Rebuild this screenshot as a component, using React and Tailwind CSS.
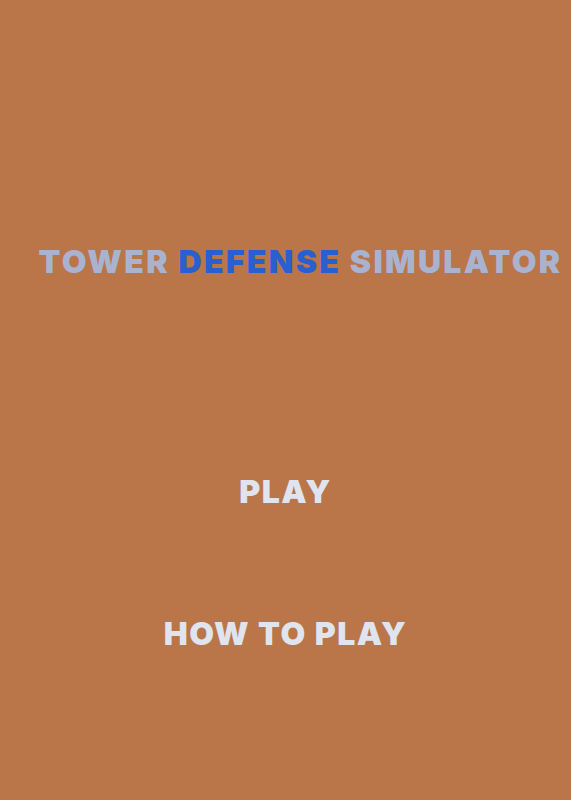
export default function App() {
  return (
    <div className="min-h-[800px] w-full bg-[#ba7548] flex flex-col items-center" style={{ fontFamily: 'Inter, "Noto Sans", sans-serif' }}>
      <h1 className="mt-[240px] pl-[30px] text-[32px] leading-[44px] font-black whitespace-nowrap tracking-[2.3px] text-[#a9b3cf]">
        TOWER <span className="text-[#2a5fd1]">DEFENSE</span> SIMULATOR
      </h1>
      <button className="mt-[186px] text-[32px] leading-[44px] font-black text-[#dfe4ef] tracking-[1.5px]">PLAY</button>
      <button className="mt-[98px] text-[32px] leading-[44px] font-black text-[#dfe4ef] tracking-[1.5px]">HOW TO PLAY</button>
    </div>
  );
}
